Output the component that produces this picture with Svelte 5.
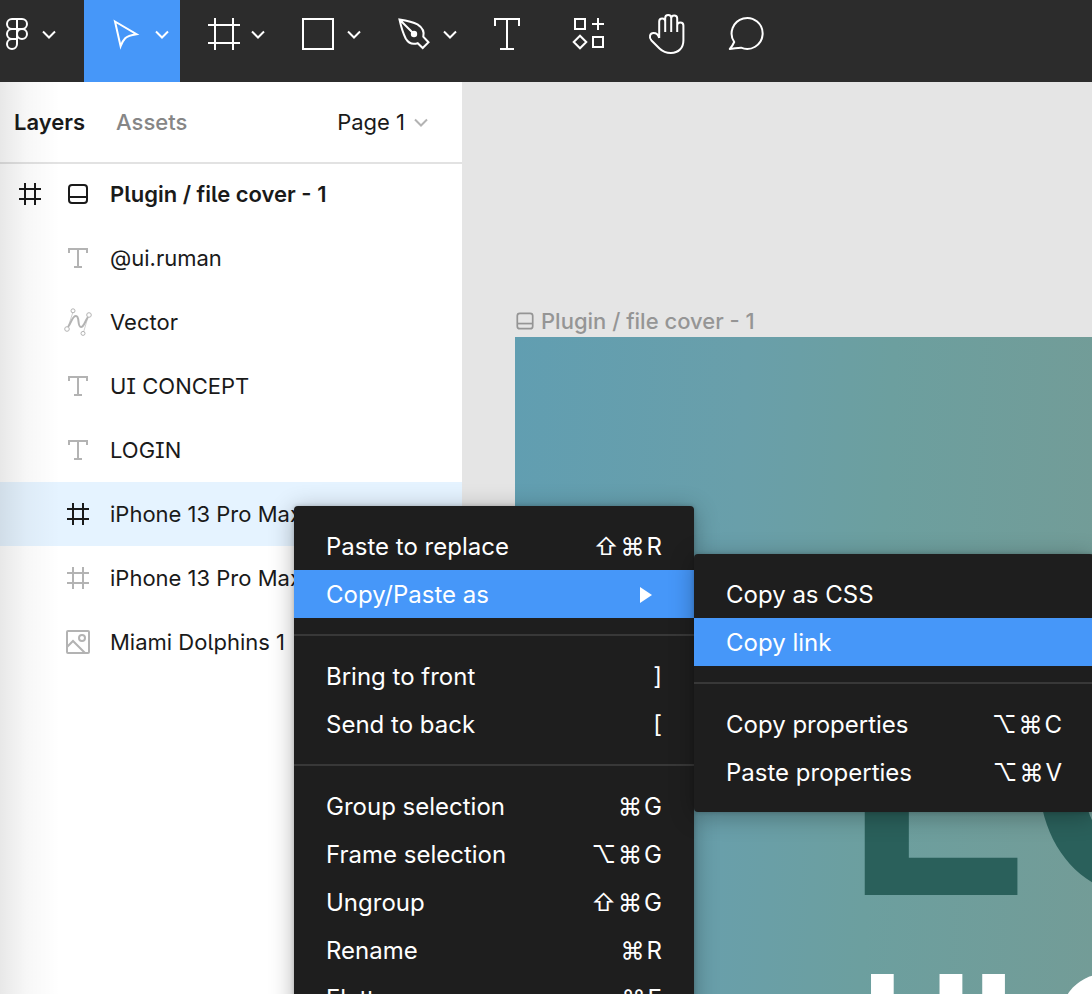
<script>
  const layers = [
    { name: 'Plugin / file cover - 1', icon: 'cover', root: true },
    { name: '@ui.ruman', icon: 'text' },
    { name: 'Vector', icon: 'vector' },
    { name: 'UI CONCEPT', icon: 'text' },
    { name: 'LOGIN', icon: 'text' },
    { name: 'iPhone 13 Pro Max - 1', icon: 'frame', selected: true },
    { name: 'iPhone 13 Pro Max - 2', icon: 'frame' },
    { name: 'Miami Dolphins 1', icon: 'image' }
  ];

  const mainMenu = [
    [
      { label: 'Paste to replace', keys: ['⇧', '⌘', 'R'] },
      { label: 'Copy/Paste as', submenu: true, active: true }
    ],
    [
      { label: 'Bring to front', keys: [']'] },
      { label: 'Send to back', keys: ['['] }
    ],
    [
      { label: 'Group selection', keys: ['⌘', 'G'] },
      { label: 'Frame selection', keys: ['⌥', '⌘', 'G'] },
      { label: 'Ungroup', keys: ['⇧', '⌘', 'G'] },
      { label: 'Rename', keys: ['⌘', 'R'] },
      { label: 'Flatten', keys: ['⌘', 'E'] }
    ]
  ];

  const subMenu = [
    [
      { label: 'Copy as CSS' },
      { label: 'Copy link', active: true }
    ],
    [
      { label: 'Copy properties', keys: ['⌥', '⌘', 'C'] },
      { label: 'Paste properties', keys: ['⌥', '⌘', 'V'] }
    ]
  ];
</script>

{#snippet chevron()}
  <svg class="chevron" viewBox="0 0 16 16" aria-hidden="true"><path d="M2 5.5l6 6 6-6" /></svg>
{/snippet}

{#snippet layerIcon(kind)}
  <svg class="layer-icon" viewBox="0 0 28 28" aria-hidden="true">
    {#if kind === 'frame'}
      <path d="M9 3v22M19 3v22M3 9h22M3 19h22" />
    {:else if kind === 'cover'}
      <rect x="5" y="5" width="18" height="18" rx="3" /><path d="M5 17h18" />
    {:else if kind === 'text'}
      <path d="M5 9V5h18v4M14 5v18M10 23h8" />
    {:else if kind === 'vector'}
      <path d="M4 19C8 14 8 8 12 8s1 11 5 11c3 0 4-6 7-10" />
      <path class="thin" d="M9 4L4 19M19 26L24 9" />
      <g class="node"><circle cx="3" cy="21" r="2.3" /><circle cx="9" cy="2.8" r="2" /><circle cx="25" cy="7" r="2.3" /><circle cx="19" cy="25.4" r="2" /></g>
    {:else}
      <rect x="3" y="3" width="22" height="22" rx="1" /><circle cx="18" cy="10" r="3" /><path d="M3 19l6-6 12 12" />
    {/if}
  </svg>
{/snippet}

{#snippet menu(groups)}
  {#each groups as group, i}
    {#if i > 0}<hr />{/if}
    {#each group as item}
      <button class="item" class:active={item.active} role="menuitem">
        <span>{item.label}</span>
        {#if item.submenu}
          <svg class="arrow" viewBox="0 0 12 16" aria-hidden="true"><path d="M0 0l12 8-12 8z" /></svg>
        {:else if item.keys}
          <kbd>{#each item.keys as key}<span>{key}</span>{/each}</kbd>
        {/if}
      </button>
    {/each}
  {/each}
{/snippet}

<div class="app">
  <header class="toolbar">
    <button class="tool logo" aria-label="Main menu">
      <svg class="mark" viewBox="0 10 34 48"><path d="M17 19h-5a5 5 0 0 0 0 10h5zM17 19h5a5 5 0 0 1 0 10h-5M17 29h-5a5 5 0 0 0 0 10h5zM17 39h-5a5 5 0 1 0 5 5z" /><circle cx="22" cy="34" r="5" /></svg>
      {@render chevron()}
    </button>
    <button class="tool split current" aria-label="Move">
      <svg class="icon" viewBox="102 10 48 48"><path d="M115 21.500L136.500 34.200Q128 35.500 125.200 38.200Q122.500 41 120.600 46.200Z" /></svg>
      {@render chevron()}
    </button>
    <button class="tool split" aria-label="Frame">
      <svg class="icon" viewBox="198 10 48 48"><path d="M215 18v32M233 18v32M208 25h32M208 43h32" /></svg>
      {@render chevron()}
    </button>
    <button class="tool split" aria-label="Rectangle">
      <svg class="icon" viewBox="294 10 48 48"><rect x="303" y="19" width="30" height="30" /></svg>
      {@render chevron()}
    </button>
    <button class="tool split" aria-label="Pen">
      <svg class="icon" viewBox="390 10 48 48"><path d="M399.500 19.500Q412 21.500 417.500 24.300C422.500 27.500 424.500 32 423.300 36.800L428.500 42.300L422.700 48L417.700 43.200C412 45 408 42.500 405.700 38.500Q402 31 399.500 19.500ZL414 34" /><circle class="solid" cx="414" cy="34" r="3.2" /></svg>
      {@render chevron()}
    </button>
    <button class="tool" aria-label="Text">
      <svg class="icon" viewBox="484 10 48 48"><path d="M495 26v-7h24v7M507 19v30M500 49h14" /></svg>
    </button>
    <button class="tool" aria-label="Resources">
      <svg class="icon" viewBox="564 10 48 48"><path d="M575 19h10v10h-10zM593 37h10v10h-10zM598 18v12M592 24h12M580 35.700l6.300 6.300-6.300 6.300-6.300-6.300z" /></svg>
    </button>
    <button class="tool" aria-label="Hand">
      <svg class="icon" viewBox="644 10 48 48"><path d="M659.200 38V21.500a3 3 0 0 1 6 0V32M665.200 21.500V18a3 3 0 0 1 6 0V32M671.200 18.500a3 3 0 0 1 6 0V32M677.200 25.500a3.100 3.100 0 0 1 6.200 0V40.500C683.400 48 678.500 53 671 53C666 53 662.500 51.500 659.500 48.500L651.500 40.500C648.500 37.300 650 33 653.500 33C656.500 33 658.500 35.200 659.200 38" /></svg>
    </button>
    <button class="tool" aria-label="Comment">
      <svg class="icon" viewBox="724 10 48 48"><path stroke-linejoin="round" d="M734.200 42A15.500 15.500 0 1 1 741 47.700Q735 48 729.800 49Q732.500 46 734.200 42Z" /></svg>
    </button>
  </header>

  <div class="workspace">
    <aside class="sidebar">
      <nav class="tabs">
        <button class="tab on">Layers</button>
        <button class="tab">Assets</button>
        <button class="page">Page 1 {@render chevron()}</button>
      </nav>
      <ul class="layers">
        {#each layers as layer}
          <li class:root={layer.root} class:selected={layer.selected}>
            {#if layer.root}{@render layerIcon('frame')}{/if}
            {@render layerIcon(layer.icon)}
            <span>{layer.name}</span>
          </li>
        {/each}
      </ul>
    </aside>

    <main class="canvas">
      <div class="cover-title">{@render layerIcon('cover')}<span>Plugin / file cover - 1</span></div>
      <section class="artboard">
        <span class="art login">LOGIN</span>
        <span class="art concept">UI CONCEPT</span>
      </section>
    </main>
  </div>

  <div class="menu main-menu" role="menu">{@render menu(mainMenu)}</div>
  <div class="menu sub-menu" role="menu">{@render menu(subMenu)}</div>
</div>

<style>
  :global(body) { margin: 0; }

  .app {
    position: relative;
    display: flex;
    flex-direction: column;
    height: 100vh;
    overflow: hidden;
    font-family: Inter, 'Liberation Sans', sans-serif;
    font-size: 22px;
    line-height: 32px;
    color: #1a1a1a;
  }

  button {
    border: 0;
    padding: 0;
    background: none;
    font: inherit;
    color: inherit;
  }

  svg {
    flex: none;
    fill: none;
    stroke: currentColor;
    stroke-width: 2;
  }

  .chevron { width: 16px; height: 16px; }

  .toolbar {
    display: flex;
    flex: none;
    height: 82px;
    background: #2c2c2c;
    color: #fff;
  }
  .tool {
    display: flex;
    align-items: center;
    justify-content: center;
    box-sizing: border-box;
    width: 80px;
    padding-bottom: 14px;
  }
  .split { width: 96px; gap: 4px; padding-left: 8px; }
  .logo { width: 84px; gap: 7px; justify-content: flex-start; }
  .current { background: #4697f9; }
  .icon { width: 48px; height: 48px; }
  .mark { width: 34px; height: 48px; }
  .solid { fill: currentColor; stroke: none; }

  .workspace {
    display: flex;
    flex: 1;
    min-height: 0;
  }

  .sidebar {
    position: relative;
    flex: none;
    width: 462px;
    background: #fff;
  }
  .sidebar::after {
    content: '';
    position: absolute;
    inset: 0 auto 0 0;
    width: 60px;
    background: linear-gradient(90deg, rgba(0, 0, 0, 0.09), rgba(0, 0, 0, 0.03) 45%, transparent);
    pointer-events: none;
  }
  .tabs {
    position: relative;
    display: flex;
    align-items: center;
    gap: 31px;
    height: 80px;
    padding: 0 33px 0 14px;
    box-shadow: 0 2px #e2e2e2;
  }
  .tab { font-weight: 500; color: #868686; }
  .tab.on { font-weight: 600; color: #1a1a1a; }
  .page {
    display: flex;
    align-items: center;
    gap: 8px;
    margin-left: auto;
  }
  .page .chevron { color: #b3b3b3; }

  .layers {
    margin: 0;
    padding: 0;
    list-style: none;
    font-feature-settings: 'cv05', 'cv08';
  }
  li {
    display: flex;
    align-items: center;
    gap: 18px;
    height: 64px;
    padding-left: 64px;
    white-space: nowrap;
  }
  .layer-icon { width: 28px; height: 28px; color: #b3b3b3; }
  .thin { stroke-width: 1; opacity: 0.6; }
  .node { fill: #fff; stroke-width: 1; }
  .root { padding-left: 16px; font-weight: 600; }
  .root .layer-icon + .layer-icon { margin-left: 2px; }
  .root .layer-icon, .selected .layer-icon { color: #1a1a1a; }
  .selected { background: #e5f3ff; }

  .canvas {
    display: flex;
    flex: 1;
    flex-direction: column;
    min-width: 0;
    padding: 223px 0 0 53px;
    background: #e5e5e5;
    overflow: hidden;
  }
  .cover-title {
    display: flex;
    align-items: center;
    gap: 4px;
    height: 32px;
    margin-left: -2px;
    color: #959595;
    font-weight: 500;
    white-space: nowrap;
  }
  .cover-title .layer-icon { width: 24px; height: 24px; color: inherit; }
  .artboard {
    position: relative;
    flex: 1;
    background: linear-gradient(93deg, #619eb1, #699faa 38%, #6c9f9f 62%, #739c97);
    overflow: hidden;
  }
  .art {
    position: absolute;
    line-height: 1;
    white-space: nowrap;
  }
  .login { left: 325px; top: 267px; font-size: 338px; font-weight: 600; color: #2a605b; }
  .concept { left: 346px; top: 617px; font-size: 152px; font-weight: 700; color: #fff; }

  .menu {
    position: absolute;
    box-sizing: border-box;
    width: 400px;
    padding: 16px 0;
    border-radius: 4px;
    background: #1e1e1e;
    color: #fff;
    font-size: 24px;
    box-shadow: 0 4px 24px rgba(0, 0, 0, 0.3), 0 0 4px rgba(0, 0, 0, 0.2);
  }
  .main-menu { left: 294px; top: 506px; }
  .sub-menu { left: 694px; top: 554px; }
  .item {
    display: flex;
    align-items: center;
    justify-content: space-between;
    width: 100%;
    height: 48px;
    padding: 2px 32px 0;
    white-space: nowrap;
  }
  .item.active { background: #4697f9; }
  hr {
    height: 2px;
    margin: 16px 0;
    border: 0;
    background: #383838;
  }
  .arrow {
    width: 12px;
    height: 16px;
    margin-right: 10px;
    fill: currentColor;
    stroke: none;
  }
  kbd { display: flex; gap: 2px; font: inherit; }
</style>
